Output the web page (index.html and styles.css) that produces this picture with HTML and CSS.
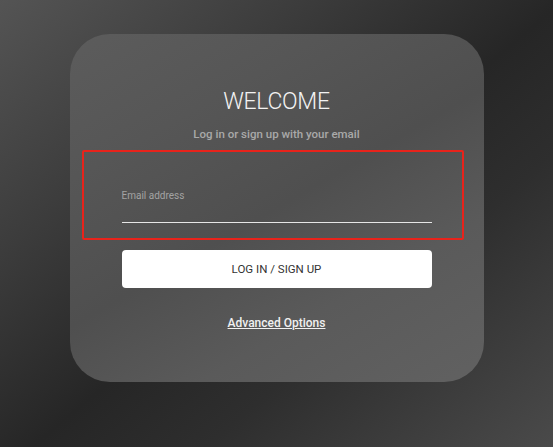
FILE: index.html
```html
<!DOCTYPE html>
<html>
<head>
<meta charset="utf-8">
<link rel="stylesheet" href="styles.css">
</head>
<body>
<main class="stage">
  <section class="card">
    <h1 class="title">WELCOME</h1>
    <p class="subtitle">Log in or sign up with your email</p>
    <div class="highlight">
      <label class="field">
        <span class="field-label">Email address</span>
        <input class="field-input" type="email">
      </label>
    </div>
    <button class="btn" type="button">LOG IN / SIGN UP</button>
    <a class="link" href="#">Advanced Options</a>
  </section>
</main>
</body>
</html>
```
FILE: styles.css
```css
html, body {
  margin: 0;
  padding: 0;
  height: 100%;
}
body {
  background: linear-gradient(140deg, #545454 0%, #3c3c3c 28%, #262626 52%, #2e2e2e 68%, #4a4a4a 100%);
  font-family: "Roboto", "Liberation Sans", sans-serif;
  overflow: hidden;
}
.stage {
  display: flex;
  justify-content: center;
  padding-top: 34px;
}
.card {
  width: 414px;
  height: 348px;
  box-sizing: border-box;
  border-radius: 40px;
  background: linear-gradient(150deg, #5c5c5c 0%, #565656 25%, #4f4f4f 50%, #5a5a5a 72%, #616161 100%);
  display: flex;
  flex-direction: column;
  align-items: center;
  padding-top: 55px;
}
.title {
  margin: 0;
  font-weight: 300;
  font-size: 23px;
  line-height: 26px;
  color: #f2f2f2;
  letter-spacing: -0.3px;
}
.subtitle {
  margin: 12px 0 0;
  font-size: 11.5px;
  line-height: 14px;
  color: #a9a9a9;
  font-weight: 500;
}
.highlight {
  align-self: flex-start;
  margin: 9px 0 0 12px;
  width: 382px;
  height: 90px;
  box-sizing: border-box;
  border: 2px solid #e8231b;
  border-radius: 2px;
  padding: 38px 30px 0 38px;
}
.field {
  display: flex;
  flex-direction: column;
  width: 310px;
}
.field-label {
  font-size: 10px;
  line-height: 12px;
  color: #a3a3a3;
}
.field-input {
  margin: 0;
  height: 20px;
  padding: 0;
  border: none;
  border-bottom: 1px solid #e6e6e6;
  background: transparent;
  outline: none;
}
.btn {
  margin-top: 10px;
  width: 310px;
  height: 38px;
  border: none;
  border-radius: 4px;
  background: #ffffff;
  color: #333333;
  font-family: "Roboto", "Liberation Sans", sans-serif;
  font-size: 11.5px;
  padding: 0;
}
.link {
  margin-top: 28px;
  font-size: 12px;
  line-height: 14px;
  color: #f0f0f0;
  text-decoration: underline;
  font-weight: 500;
}
```
